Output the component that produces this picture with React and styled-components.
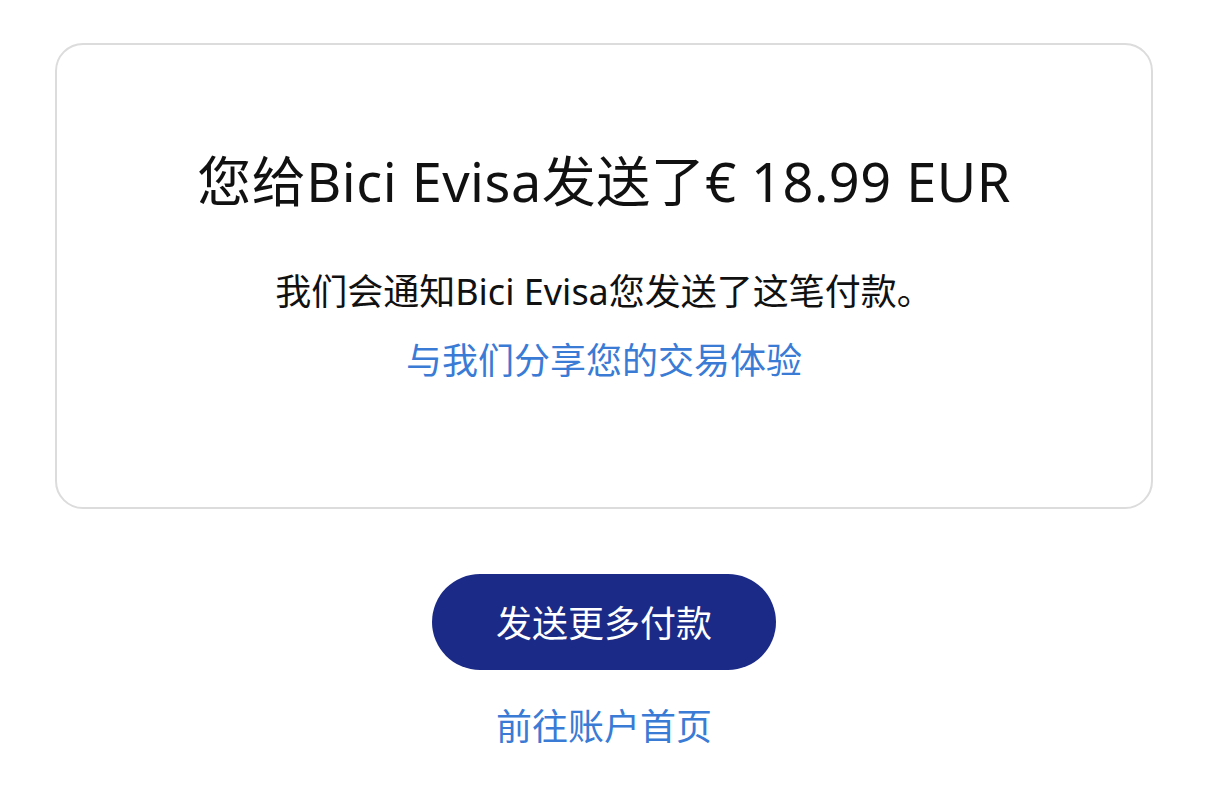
import React from "react";
import styled, { createGlobalStyle } from "styled-components";

const GlobalStyle = createGlobalStyle`
  html, body {
    margin: 0;
    padding: 0;
    background: #fff;
  }
  body {
    font-family: "Noto Sans", "Noto Sans CJK SC", sans-serif;
    color: #111;
  }
`;

const App = () => {
  return (
    <>
      <GlobalStyle />
      <StyledPage>
        <ResultCard>
          <CardHead>您给Bici Evisa发送了€ 18.99 EUR</CardHead>
          <CardText>我们会通知Bici Evisa您发送了这笔付款。</CardText>
          <TextLink href="#">与我们分享您的交易体验</TextLink>
        </ResultCard>
        <Actions>
          <PrimaryButton type="button">发送更多付款</PrimaryButton>
          <TextLink href="#" bottom>
            前往账户首页
          </TextLink>
        </Actions>
      </StyledPage>
    </>
  );
};

export default App;

const StyledPage = styled.div`
  width: 1230px;
  min-height: 786px;
  box-sizing: border-box;
  padding: 43px 77px 0 55px;
  display: flex;
  flex-direction: column;
`;

const ResultCard = styled.div`
  box-sizing: border-box;
  width: 1098px;
  height: 466px;
  border: 2px solid #dcdcdc;
  border-radius: 28px;
  display: flex;
  flex-direction: column;
  align-items: center;
  padding-top: 101px;
`;

const CardHead = styled.h1`
  margin: 0;
  font-size: 54px;
  font-weight: 400;
  line-height: 70px;
  color: #111;
  letter-spacing: 0.5px;
`;

const CardText = styled.p`
  margin: 51px 0 0;
  font-size: 36px;
  line-height: 50px;
  color: #111;
`;

const TextLink = styled.a`
  margin-top: ${(props) => (props.bottom ? "32px" : "19px")};
  font-size: 36px;
  line-height: 50px;
  color: #3a7bd5;
  text-decoration: none;
`;

const Actions = styled.div`
  width: 1098px;
  display: flex;
  flex-direction: column;
  align-items: center;
  margin-top: 65px;
`;

const PrimaryButton = styled.button`
  width: 344px;
  height: 96px;
  padding: 4px 0 0;
  border: none;
  border-radius: 48px;
  background: #1b2a86;
  color: #fff;
  font-family: "Noto Sans", "Noto Sans CJK SC", sans-serif;
  font-size: 36px;
  line-height: 50px;
  cursor: pointer;
`;
